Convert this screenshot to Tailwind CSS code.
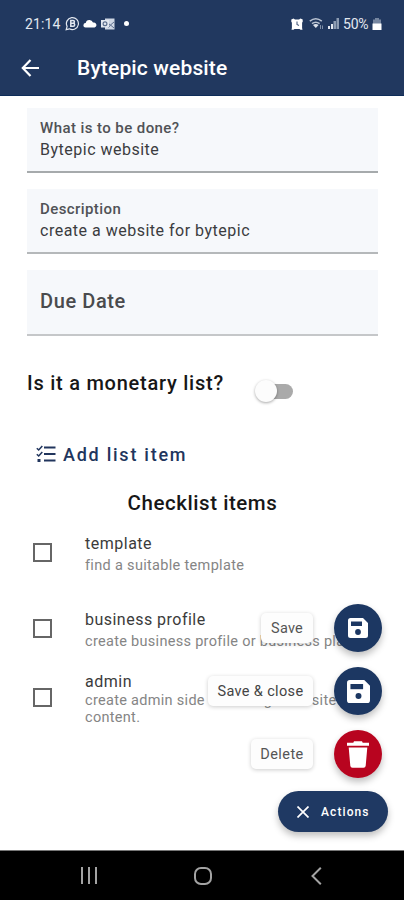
<!DOCTYPE html>
<html lang="en">
<head>
<meta charset="utf-8">
<meta name="viewport" content="width=device-width, initial-scale=1">
<title>Bytepic website</title>
<script src="https://cdn.jsdelivr.net/npm/@tailwindcss/browser@4"></script>
</head>
<body class="bg-white font-[Roboto,sans-serif]">
<div class="relative flex h-[900px] w-[404px] flex-col overflow-hidden bg-white whitespace-nowrap">
  <header class="h-24 shrink-0 border-b border-[#0e2d59] bg-[#21385f] text-white">
    <div class="flex h-[47px] items-center pl-[25px] pr-[22px] text-[14px] leading-4 text-[#e3e8f0]">
      <span class="w-[40px] tracking-[0.1px]">21:14</span>
      <svg class="h-[15px] w-[15px]" viewBox="0 0 15 15" fill="none" stroke="currentColor"><path d="M1.2 13.6l.9-3.2a6 6 0 1 1 2.3 2.4z" stroke-width="1.2"/><path d="M5.8 4.400h2.200a1.400 1.400 0 0 1 0 2.900H5.800h2.400a1.500 1.500 0 0 1 0 3H5.800z" stroke-width="1.5"/></svg>
      <svg class="ml-[3px] h-[9px] w-[14px]" viewBox="0 0 14 9" fill="#fff"><path d="M2.5 8.5a2.2 2.2 0 0 1 .2-4.4A3.8 3.8 0 0 1 10 3.6a2.5 2.5 0 0 1 1.6 4.9z"/></svg>
      <svg class="ml-[4px] h-[12px] w-[14px]" viewBox="0 0 14 12"><path d="M4 .5h9.500v11H4z" fill="#cfd7e4"/><path d="M8 6l1.500 1L13 4M7 10l2.500-3L13 10" fill="none" stroke="#5d6f8e"/><path d="M0 2h8v7.500H0z" fill="#e3e8f0"/><circle cx="4" cy="5.800" r="1.900" fill="none" stroke="#5d6f8e" stroke-width="1.200"/></svg>
      <span class="ml-[9px] h-[5px] w-[5px] rounded-full bg-white"></span>
      <svg class="ml-auto h-[12px] w-[12px]" viewBox="0 0 12 12"><path d="M.3 1.500L2.500.5 4 1.500h4L9.500.5l2.200 1V4l-.6.5V10l.4 1.700H9.500L8.500 11h-5l-1 .7H.5L.9 10V4.500L.3 4z" fill="#fff"/><path d="M6 3.500v3l2 1" fill="none" stroke="#4b5d7d" stroke-width="1.100"/></svg>
      <svg class="ml-[6px] h-[13px] w-[16px]" viewBox="0 0 16 13" fill="none" stroke="#b9c3d2" stroke-width="1.5"><path d="M.8 4.2q6-5 12 0M3 6.7q3.8-3 7.6 0"/><path d="M4 8q2.800-2 5.600 0L6.800 11z" fill="#dce2eb" stroke="none"/><path d="M11.500 8v4M13.500 8.500V12" stroke="#7f8ea7" stroke-width="1"/></svg>
      <svg class="ml-[3px] h-[11px] w-[11px]" viewBox="0 0 11 11"><path d="M0 8h2v3H0zM3 6h2v5H3z" fill="#e3e8f0"/><path d="M5.500 3h2.500v8H5.500zM8.500 0H11v11H8.500z" fill="#8c9bb2"/></svg>
      <span class="ml-[4px] w-[29px] tracking-[-0.2px]">50%</span>
      <svg class="h-[12px] w-[10px]" viewBox="0 0 10 12"><path d="M3 0h4v1.500h2V6H1V1.500h2z" fill="#7686a0"/><path d="M.5 5.500h9V12h-9z" fill="#fff"/></svg>
    </div>
    <div class="flex h-[42px] items-center pl-[21px]">
      <svg class="mb-px h-[18px] w-[19px]" viewBox="0 0 19 18" fill="none" stroke="currentColor" stroke-width="2.2"><path d="M9.500 1L1.800 9l7.700 8M1.800 9H18"/></svg>
      <h1 class="ml-[37px] pt-px text-[21px] font-medium tracking-[0.15px]">Bytepic website</h1>
    </div>
  </header>

  <main class="flex h-[754px] shrink-0 flex-col pl-[27px] pr-[26px] pt-[12px]">
    <section class="h-[65px] border-b-2 border-[#a6aaac] bg-[#f6f8fb] pl-[13px] pt-[10px]">
      <p class="text-[15px] leading-[20px] font-medium tracking-[0.42px] text-[#505256]">What is to be done?</p>
      <p class="mt-[2px] text-[16px] leading-[20px] tracking-[0.5px] text-[#3b3c3f]">Bytepic website</p>
    </section>
    <section class="mt-[16px] h-[65px] border-b-2 border-[#b5b8ba] bg-[#f6f8fb] pl-[13px] pt-[10px]">
      <p class="text-[15px] leading-[20px] font-medium tracking-[0.42px] text-[#505256]">Description</p>
      <p class="mt-[2px] text-[16px] leading-[20px] tracking-[0.5px] text-[#3b3c3f]">create a website for bytepic</p>
    </section>
    <section class="mt-[16px] flex h-[66px] items-center border-b-2 border-[#c5c7c9] bg-[#f6f8fb] pb-[2px] pl-[13px]">
      <p class="text-[20px] font-medium tracking-[0.6px] text-[#4a4b4d]">Due Date</p>
    </section>
    <div class="mt-[34px] flex h-[34px]">
      <p class="w-[228px] text-[20px] leading-[26px] font-medium tracking-[0.75px] text-[#171717]">Is it a monetary list?</p>
      <span class="mt-[10px] flex h-[22px] w-[39px] items-center">
        <span class="z-10 h-[22px] w-[22px] shrink-0 rounded-full bg-[#fcfcfc] shadow-[0_1px_3px_rgba(0,0,0,0.35)]"></span>
        <span class="-ml-[14px] h-[15px] w-[30px] shrink-0 rounded-full bg-[#aaa]"></span>
      </span>
    </div>
    <div class="mt-[37px] flex h-[26px] items-center pl-[9px] text-[#21355d]">
      <svg class="h-[18px] w-[20px]" viewBox="0 0 20 18" fill="none" stroke="currentColor"><path d="M8 2.500h11.500M8 9h11.500M8 15.500h11.500" stroke-width="2"/><path d="M.8 3.200L2.700 5 6.300.9M.8 9.200L2.700 11l3.600-4.100" stroke-width="1.500"/><path d="M1.500 14h3v3h-3z" fill="currentColor" stroke="none"/></svg>
      <span class="ml-[7px] text-[18px] font-medium tracking-[1.750px]">Add list item</span>
    </div>
    <h2 class="mt-[23px] text-center text-[20.500px] leading-[26px] font-medium tracking-[0.55px] text-[#171717]">Checklist items</h2>
    <div class="mt-[15px] flex h-[44px] items-center pl-[6px]">
      <span class="mb-px h-[19px] w-[19px] border-2 border-[#666]"></span>
      <div class="ml-[33px] pt-[2px]">
        <p class="text-[16px] leading-[22px] tracking-[0.5px] text-[#3b3b3b]">template</p>
        <p class="text-[14.500px] leading-[21px] tracking-[0.32px] text-[#858585]">find a suitable template</p>
      </div>
    </div>
    <div class="mt-[32px] flex h-[44px] items-center pl-[6px]">
      <span class="mb-px h-[19px] w-[19px] border-2 border-[#666]"></span>
      <div class="ml-[33px] pt-[2px]">
        <p class="text-[16px] leading-[22px] tracking-[0.48px] text-[#3b3b3b]">business profile</p>
        <p class="text-[14.500px] leading-[21px] tracking-[0.3px] text-[#858585]">create business profile or business plan</p>
      </div>
    </div>
    <div class="mt-[18px] flex h-[58px] items-center pl-[6px]">
      <span class="mb-px h-[19px] w-[19px] shrink-0 border-2 border-[#666]"></span>
      <div class="ml-[33px] pt-[2px]">
        <p class="text-[16px] leading-[20px] tracking-[0.5px] text-[#3b3b3b]">admin</p>
        <p class="text-[14.500px] leading-[17px] tracking-[0.3px] text-[#858585]">create admin side to manage website<br>content.</p>
      </div>
    </div>
  </main>

  <div class="absolute right-[16px] top-[604px] flex flex-col items-end">
    <div class="mr-[6px] flex h-[48px] items-center">
      <span class="mr-[21px] flex h-[30px] w-[52px] items-center justify-center rounded-[5px] bg-[#fdfdfd] pt-px text-[14.500px] tracking-[0.2px] text-[#555] shadow-[0_1px_4px_rgba(0,0,0,0.2)]">Save</span>
      <span class="flex h-[48px] w-[48px] items-center justify-center rounded-full bg-[#1c3762] shadow-[0_4px_7px_rgba(0,0,0,0.25)]"><svg class="h-[20px] w-[20px]" viewBox="0 0 20 20"><path d="M2.500 0H15l5 5v12.500a2.500 2.500 0 0 1-2.500 2.500h-15A2.500 2.500 0 0 1 0 17.500v-15A2.500 2.500 0 0 1 2.500 0z" fill="#fff"/><path d="M3 3.500h11V8H3z" fill="#1c3762"/><circle cx="10" cy="14" r="2.900" fill="#1c3762"/></svg></span>
    </div>
    <div class="mr-[6px] mt-[15px] flex h-[48px] items-center">
      <span class="mr-[21px] flex h-[30px] w-[105px] items-center justify-center rounded-[5px] bg-[#fdfdfd] pt-px text-[14.500px] tracking-[0.35px] text-[#444] shadow-[0_1px_4px_rgba(0,0,0,0.2)]">Save &amp; close</span>
      <span class="flex h-[48px] w-[48px] items-center justify-center rounded-full bg-[#1c3762] shadow-[0_4px_7px_rgba(0,0,0,0.25)]"><svg class="h-[23px] w-[23px]" viewBox="0 0 20 20"><path d="M2.500 0H15l5 5v12.500a2.500 2.500 0 0 1-2.500 2.500h-15A2.500 2.500 0 0 1 0 17.500v-15A2.500 2.500 0 0 1 2.500 0z" fill="#fff"/><path d="M3 3.500h11V8H3z" fill="#1c3762"/><circle cx="10" cy="14" r="2.600" fill="#1c3762"/></svg></span>
    </div>
    <div class="mr-[6px] mt-[15px] flex h-[48px] items-center">
      <span class="mr-[21px] flex h-[30px] w-[62px] items-center justify-center rounded-[5px] bg-[#fdfdfd] pt-px text-[14.500px] tracking-[0.4px] text-[#555] shadow-[0_1px_4px_rgba(0,0,0,0.2)]">Delete</span>
      <span class="flex h-[48px] w-[48px] items-center justify-center rounded-full bg-[#b8041f] shadow-[0_4px_7px_rgba(0,0,0,0.25)]"><svg class="h-[27px] w-[24px]" viewBox="0 0 24 27" fill="#fff"><path d="M1 1.800h6.300L8 .3h8l.7 1.500H23v3H1zM2.700 6.500h18.600l-1.600 18.200A2.200 2.200 0 0 1 17.500 26.700h-11a2.200 2.200 0 0 1-2.200-2z"/></svg></span>
    </div>
    <div class="mt-[13px] flex h-[41px] w-[110px] items-center rounded-full bg-[#1f3963] pl-[19px] text-white shadow-[0_4px_7px_rgba(0,0,0,0.25)]">
      <svg class="h-[12px] w-[12px]" viewBox="0 0 12 12" stroke="currentColor" stroke-width="1.700"><path d="M.5.5l11 11M11.500.5l-11 11"/></svg>
      <span class="ml-[12px] text-[12px] font-medium tracking-[1.1px]">Actions</span>
    </div>
  </div>

  <nav class="flex h-[50px] shrink-0 items-center border-t border-[#777] bg-black pl-[81px] pt-[1px] text-[#a3a3a3]">
    <svg class="h-[18px] w-[16px]" viewBox="0 0 16 18" stroke="currentColor" stroke-width="2"><path d="M1 0v17M8 0v17M15 0v17"/></svg>
    <svg class="ml-[97px] h-[18px] w-[18px]" viewBox="0 0 18 18" fill="none" stroke="currentColor" stroke-width="2"><rect x="1" y="1" width="16" height="16" rx="6"/></svg>
    <svg class="ml-[99px] h-[18px] w-[11px]" viewBox="0 0 11 18" fill="none" stroke="currentColor" stroke-width="2"><path d="M9.800.7L1.500 9l8.300 8.300"/></svg>
  </nav>
</div>
</body>
</html>
